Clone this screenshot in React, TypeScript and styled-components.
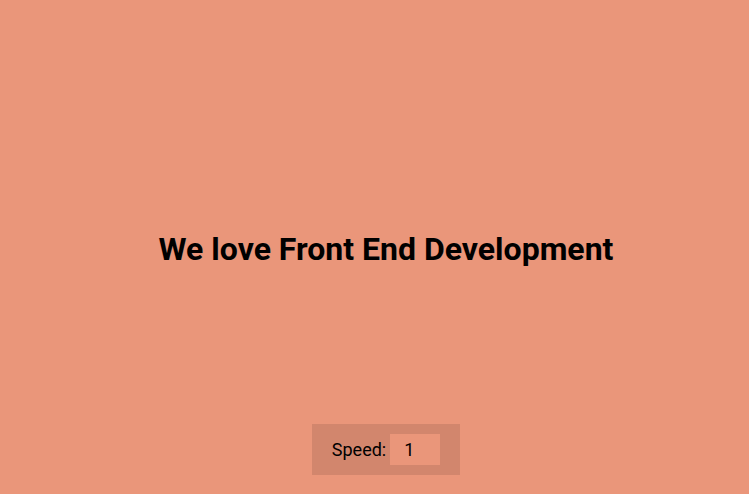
import React, { useState } from "react";
import styled, { createGlobalStyle } from "styled-components";

const GlobalStyle = createGlobalStyle`
  html, body {
    margin: 0;
    padding: 0;
    height: 100%;
    overflow: hidden;
    background: #ea967a;
    font-family: Roboto, "Liberation Sans", sans-serif;
  }
`;

const Page = styled.main`
  width: 772px;
  height: 100vh;
  display: grid;
  grid-template-rows: 1fr auto 1fr;
  justify-items: center;
`;

const Heading = styled.h1`
  grid-row: 2;
  margin: 4px 0 0;
  font-size: 32px;
  font-weight: 700;
  color: #000;
  line-height: 37px;
`;

const Footer = styled.div`
  grid-row: 3;
  align-self: end;
  margin-bottom: 19px;
`;

const Controls = styled.div`
  display: flex;
  align-items: center;
  gap: 4px;
  padding: 10px 20px;
  background: rgba(0, 0, 0, 0.1);
`;

const Label = styled.label`
  font-size: 18px;
  color: #000;
`;

const SpeedInput = styled.input`
  box-sizing: border-box;
  width: 50px;
  height: 31px;
  border: none;
  outline: none;
  padding: 0 0 0 14px;
  background: #ea967a;
  font-family: Roboto, "Liberation Sans", sans-serif;
  font-size: 18px;
  color: #000;
`;

export default function App() {
  const [speed, setSpeed] = useState("1");
  return (
    <>
      <GlobalStyle />
      <Page>
        <Heading>We love Front End Development</Heading>
        <Footer>
          <Controls>
            <Label htmlFor="speed">Speed:</Label>
            <SpeedInput
              id="speed"
              type="number"
              value={speed}
              onChange={(e) => setSpeed(e.target.value)}
            />
          </Controls>
        </Footer>
      </Page>
    </>
  );
}
